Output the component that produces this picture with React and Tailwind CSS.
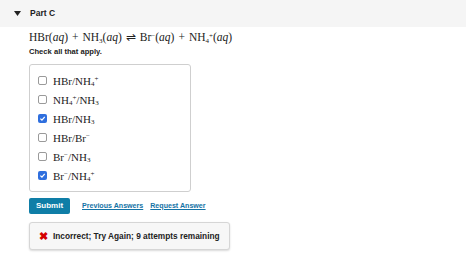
const options = [
  { label: <>HBr/NH<sub>4</sub><sup>+</sup></>, checked: false },
  { label: <>NH<sub>4</sub><sup>+</sup>/NH<sub>3</sub></>, checked: false },
  { label: <>HBr/NH<sub>3</sub></>, checked: true },
  { label: <>HBr/Br<sup>−</sup></>, checked: false },
  { label: <>Br<sup>−</sup>/NH<sub>3</sub></>, checked: false },
  { label: <>Br<sup>−</sup>/NH<sub>4</sub><sup>+</sup></>, checked: true },
];

function Box({ checked }) {
  if (checked) {
    return (
      <span className="flex h-[9px] w-[9px] items-center justify-center rounded-[2px] bg-[#2f6fde]">
        <svg width="7" height="7" viewBox="0 0 10 10">
          <path d="M2 5.2 L4.2 7.4 L8.2 2.8" fill="none" stroke="white" strokeWidth="1.8" />
        </svg>
      </span>
    );
  }
  return <span className="h-[9px] w-[9px] rounded-[2px] border border-[#9a9a9a] bg-white" />;
}

const op = "mx-[4px] not-italic";

export default function App() {
  return (
    <div className="h-[258px] w-[474px] bg-white font-['Liberation_Sans',Arial,sans-serif] text-[#222]">
      {/* Part header */}
      <div className="flex h-[27px] w-[466px] items-center bg-[#f5f5f5] pl-[14px]">
        <svg width="7" height="5" viewBox="0 0 7 5" className="mr-[9px]">
          <path d="M0 0 H7 L3.5 5 Z" fill="#222" />
        </svg>
        <span className="text-[8.5px] font-bold">Part C</span>
      </div>

      <div className="pl-[29px]">
        <div className="mt-[3px] font-['Liberation_Serif',serif] text-[11.5px] leading-[14px] whitespace-nowrap [&_sub]:text-[7px] [&_sup]:text-[7px]">
          HBr(<i>aq</i>)<span className={op}>+</span>NH<sub>3</sub>(<i>aq</i>)<span className={op}>⇌</span>Br<sup>−</sup>(<i>aq</i>)<span className={op}>+</span>NH<sub>4</sub><sup>+</sup>(<i>aq</i>)
        </div>
        <div className="mt-[3px] text-[7.6px] font-bold leading-[10px]">Check all that apply.</div>

        <div className="mt-[7px] w-[162px] rounded-[3px] border border-[#cfcfcf] px-[8px] py-[6px]">
          {options.map((o, i) => (
            <div key={i} className="flex h-[19px] items-center gap-[6px]">
              <Box checked={o.checked} />
              <span className="font-['Liberation_Serif',serif] text-[11px] leading-[12px] [&_sub]:text-[7px] [&_sup]:text-[7px]">{o.label}</span>
            </div>
          ))}
        </div>

        <div className="mt-[6px] flex items-center">
          <button className="h-[16px] w-[41px] rounded-[2px] bg-[#0f7ea7] text-[8px] font-bold text-white">Submit</button>
          <span className="ml-[12px] text-[7.1px] font-bold text-[#1473a6] underline">Previous Answers</span>
          <span className="ml-[7px] text-[7.1px] font-bold text-[#1473a6] underline">Request Answer</span>
        </div>

        <div className="mt-[8px] flex h-[28px] w-[201px] items-center rounded-[3px] border border-[#d6d6d6] bg-[#f7f7f7] pl-[9px] shadow-[0_1px_2px_rgba(0,0,0,0.15)]">
          <span className="text-[11px] font-bold text-[#d40000]">✖</span>
          <span className="ml-[5px] text-[8.3px] font-bold">Incorrect; Try Again; 9 attempts remaining</span>
        </div>
      </div>
    </div>
  );
}
